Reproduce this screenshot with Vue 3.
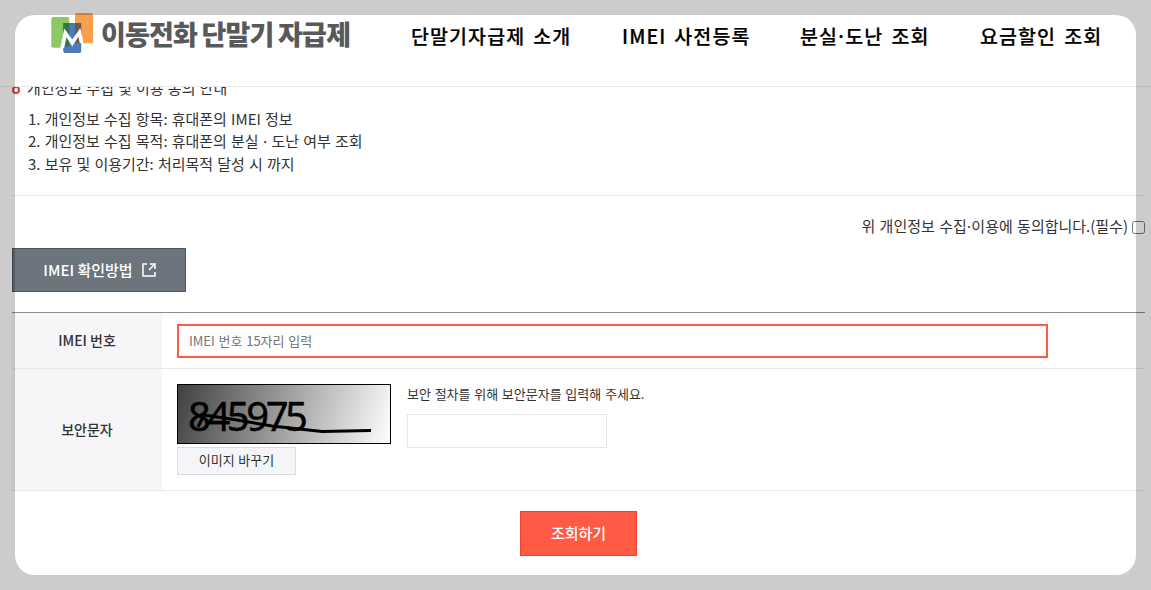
<script setup>
import { ref } from "vue";

// 상단 메뉴
const menus = [
  { key: "intro", name: "단말기자급제 소개" },
  { key: "imei", name: "IMEI 사전등록" },
  { key: "lost", name: "분실·도난 조회" },
  { key: "sale", name: "요금할인 조회" }
];

// 개인정보 수집 안내
const notices = [
  "1. 개인정보 수집 항목: 휴대폰의 IMEI 정보",
  "2. 개인정보 수집 목적: 휴대폰의 분실 · 도난 여부 조회",
  "3. 보유 및 이용기간: 처리목적 달성 시 까지"
];

const agreeText = "위 개인정보 수집·이용에 동의합니다.(필수)";

// 가운뎃점은 폭이 넓어서 따로 감싼다
const splitDot = (text) => text.split(/(·)/);

const agree = ref(false);
const imei = ref("");
const captcha = ref("");
</script>

<template>
  <div class="page">
    <header class="header">
      <a class="logo">
        <svg class="logo-mark" width="44" height="42" viewBox="0 0 44 42">
          <rect x="0.3" y="4" width="18" height="30.800" rx="1.800" fill="#8cc965" />
          <rect x="24" y="0" width="18" height="30.200" rx="1.800" fill="#fc9f4c" />
          <rect x="12.300" y="10" width="17.900" height="30" rx="1.800" fill="#4a79bd" />
          <path d="M12.300 10h6v23l-6 1.800z" fill="#36734f" />
          <path d="M24 10h6.200v20.200H24z" fill="#665c4a" />
          <path d="M13.300 15.500L21.300 26.500L29.300 15L32.600 30.300H28.800L27.400 23.800L21.300 33.600L15.400 24.300L13.200 35H9.300z" fill="#fff" />
        </svg>
        <span class="logo-text">이동전화 단말기 자급제</span>
      </a>
      <nav class="gnb">
        <a v-for="menu in menus" :key="menu.key" class="gnb-item">
          <span v-for="(part, i) in splitDot(menu.name)" :key="i" :class="{ mid: part === '·' }">{{ part }}</span>
        </a>
      </nav>
    </header>

    <main class="content">
      <section class="privacy">
        <h3 class="privacy-title"><i class="dot"></i>개인정보 수집 및 이용 동의 안내</h3>
        <ul class="privacy-list">
          <li v-for="notice in notices" :key="notice">
            <span v-for="(part, i) in splitDot(notice)" :key="i" :class="{ mid: part === '·' }">{{ part }}</span>
          </li>
        </ul>
      </section>

      <label class="agree">
        <span class="agree-text">
          <span v-for="(part, i) in splitDot(agreeText)" :key="i" :class="{ mid: part === '·' }">{{ part }}</span>
        </span>
        <input v-model="agree" type="checkbox" />
      </label>

      <button type="button" class="btn-guide">
        <span>IMEI 확인방법</span>
        <svg width="14" height="14" viewBox="0 0 14 14" fill="none" stroke="#fff" stroke-width="1.500">
          <path d="M5 1H1v12h12V9" />
          <path d="M8 1h5v5M12.700 1.300L7 7" />
        </svg>
      </button>

      <div class="form">
        <div class="row row-imei">
          <div class="th">IMEI 번호</div>
          <div class="td">
            <input v-model="imei" class="input-imei" type="text" maxlength="15" placeholder="IMEI 번호 15자리 입력" />
          </div>
        </div>
        <div class="row row-captcha">
          <div class="th">보안문자</div>
          <div class="td">
            <div class="captcha">
              <svg class="captcha-img" width="214" height="60" viewBox="0 0 214 60">
                <defs>
                  <linearGradient id="captchaBg" gradientUnits="userSpaceOnUse" x1="0" y1="0" x2="214" y2="60">
                    <stop offset="0" stop-color="#404040" />
                    <stop offset="1" stop-color="#fff" />
                  </linearGradient>
                </defs>
                <rect x="0.500" y="0.500" width="213" height="59" fill="url(#captchaBg)" stroke="#000" />
                <text x="11" y="46.500" class="captcha-num" textLength="120">845975</text>
                <path d="M21 43L27 31L60 36L95 42L145 47.500L194 46.500" fill="none" stroke="#000" stroke-width="3" />
              </svg>
              <button type="button" class="btn-refresh">이미지 바꾸기</button>
            </div>
            <div class="captcha-input">
              <p>보안 절차를 위해 보안문자를 입력해 주세요.</p>
              <input v-model="captcha" type="text" />
            </div>
          </div>
        </div>
      </div>

      <button type="button" class="btn-search">조회하기</button>
    </main>

    <div class="frame"></div>
  </div>
</template>

<style>
body {
  margin: 0;
  overflow: hidden;
}
</style>

<style scoped>
.page,
.page button,
.page input {
  font-family: "Noto Sans CJK KR", "Noto Sans", sans-serif;
}
.page {
  position: relative;
  width: 1151px;
  height: 590px;
  overflow: hidden;
  background: #fff;
  color: #333;
  font-size: 15px;
}
.page * {
  box-sizing: border-box;
}
.mid {
  margin: 0 -0.13em;
}
.header {
  display: flex;
  height: 87px;
  border-bottom: 1px solid #e9e9e9;
}
.logo {
  display: flex;
  flex: none;
  width: 360px;
  padding: 13px 0 0 51px;
}
.logo-mark {
  flex: none;
}
.logo-text {
  margin-left: 6px;
  font-size: 27px;
  font-weight: 900;
  line-height: 42px;
  letter-spacing: -0.8px;
  word-spacing: -1px;
  white-space: nowrap;
  color: #58595b;
}
.gnb {
  display: grid;
  grid-template-columns: 211px 178px 180px auto;
  padding: 21px 0 0 51px;
  font-size: 19.5px;
  font-weight: 500;
  line-height: 30px;
  letter-spacing: 1.1px;
  word-spacing: 2.5px;
  white-space: nowrap;
  color: #000;
  -webkit-text-stroke: 0.2px #000;
}
.content {
  display: flex;
  flex-direction: column;
  width: 1133px;
  height: 503px;
  margin-left: 12px;
  overflow: hidden;
}
.privacy {
  height: 109px;
  border-bottom: 1px solid #e9e9e9;
  word-spacing: 0.8px;
}
.privacy-title {
  display: flex;
  align-items: center;
  gap: 7px;
  margin: -11px 0 0;
  font-size: 15px;
  font-weight: 400;
  line-height: 23px;
}
.dot {
  width: 8px;
  height: 8px;
  margin-top: 5px;
  border: 2px solid #d93a3a;
  border-radius: 50%;
}
.privacy-list {
  margin: 8.5px 0 0 16px;
  padding: 0;
  line-height: 22.5px;
  list-style: none;
}
.agree {
  display: flex;
  align-items: center;
  justify-content: flex-end;
  gap: 4px;
  height: 22px;
  margin-top: 19px;
}
.agree-text {
  padding-bottom: 2px;
  word-spacing: 1px;
}
.agree input {
  width: 13px;
  height: 13px;
  margin: 3px 0 0;
}
.btn-guide {
  display: flex;
  flex: none;
  align-items: center;
  justify-content: center;
  gap: 9px;
  width: 174px;
  height: 44px;
  margin-top: 11px;
  padding: 0 0 0 1px;
  border: 1px solid #4d5660;
  background: #6c747e;
  color: #fff;
  font-size: 15px;
  font-weight: 500;
}
.btn-guide span {
  padding-bottom: 2px;
}
.form {
  flex: none;
  margin-top: 20px;
  border-top: 1px solid #8c8f8c;
}
.row {
  display: flex;
  border-bottom: 1px solid #e9e9e9;
}
.row-imei {
  height: 56px;
}
.row-captcha {
  height: 122px;
}
.th {
  display: flex;
  flex: none;
  align-items: center;
  justify-content: center;
  width: 150px;
  padding-bottom: 2px;
  background: #f6f6f9;
  font-size: 14px;
  font-weight: 500;
}
.td {
  display: flex;
  flex: 1;
  padding-left: 15px;
}
.input-imei {
  width: 871px;
  height: 34px;
  margin-top: 11px;
  padding: 0 10px 2px;
  border: 2px solid #ff5a43;
  outline: none;
  font-size: 13px;
  word-spacing: 0.8px;
}
.input-imei::placeholder {
  color: #757575;
}
.captcha {
  width: 214px;
  padding-top: 15px;
}
.captcha-img {
  display: block;
}
.captcha-num {
  font-family: "Noto Sans", sans-serif;
  font-size: 40px;
  stroke: #000;
  stroke-width: 0.4px;
}
.btn-refresh {
  display: block;
  width: 119px;
  height: 28px;
  margin-top: 3px;
  padding: 0 0 3px;
  border: 1px solid #dcdcdc;
  background: #f4f5f8;
  color: #333;
  font-size: 13px;
  word-spacing: 0.8px;
}
.captcha-input {
  margin-left: 16px;
  padding-top: 15px;
  font-size: 13px;
  word-spacing: 0.8px;
}
.captcha-input p {
  margin: 0;
  line-height: 20px;
}
.captcha-input input {
  display: block;
  width: 200px;
  height: 34px;
  margin-top: 10px;
  border: 1px solid #e6e6e6;
  outline: none;
}
.btn-search {
  flex: none;
  align-self: center;
  width: 117px;
  height: 45px;
  margin-top: 20px;
  padding: 0 0 2px;
  border: 1px solid #eb462e;
  background: #ff5a43;
  color: #fff;
  font-size: 15px;
  font-weight: 500;
}
/* 화면 가장자리를 덮는 반투명 테두리 */
.frame {
  position: absolute;
  inset: 15px;
  border-radius: 20px;
  box-shadow: 0 0 0 40px rgba(0, 0, 0, 0.2);
  pointer-events: none;
}
</style>
